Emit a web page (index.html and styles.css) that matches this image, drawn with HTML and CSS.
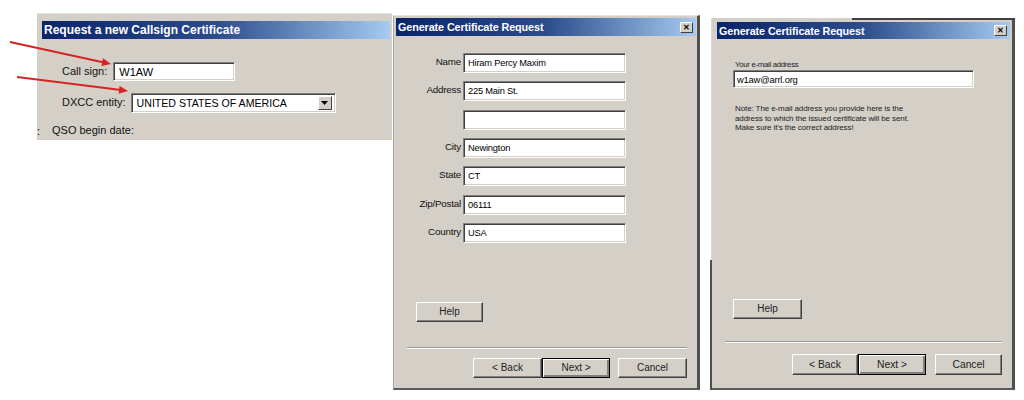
FILE: index.html
```html
<!DOCTYPE html>
<html>
<head>
<meta charset="utf-8">
<title>Callsign Certificate</title>
<link rel="stylesheet" href="styles.css">
</head>
<body>
<div class="page">
  <div class="panel1">
    <div class="title title-lg">Request a new Callsign Certificate</div>
    <div class="row1 row-call">
      <span class="lbl1">Call sign:</span>
      <span class="field field-call">W1AW</span>
    </div>
    <div class="row1 row-dxcc">
      <span class="lbl1">DXCC entity:</span>
      <span class="field select">
        <span class="select-text">UNITED STATES OF AMERICA</span>
        <span class="drop"><svg width="7" height="4" viewBox="0 0 7 4"><path d="M0 0H7L3.5 4Z" fill="#000"/></svg></span>
      </span>
    </div>
    <div class="row-qso"><span class="colon">:</span><span class="lbl1">QSO begin date:</span></div>
  </div>

  <div class="panel2">
    <div class="title title-sm"><span>Generate Certificate Request</span><span class="close">&#x2715;</span></div>
    <div class="form">
      <label>Name</label><span class="field f2">Hiram Percy Maxim</span>
      <label>Address</label><span class="field f2">225 Main St.</span>
      <label></label><span class="field f2"></span>
      <label>City</label><span class="field f2">Newington</span>
      <label>State</label><span class="field f2">CT</span>
      <label>Zip/Postal</label><span class="field f2">06111</span>
      <label>Country</label><span class="field f2">USA</span>
    </div>
    <div class="btn help2">Help</div>
    <div class="sep sep2"></div>
    <div class="btnrow btnrow2">
      <div class="btn b2">&lt; Back</div>
      <div class="btn b2 default">Next &gt;</div>
      <div class="btn b2 cancel">Cancel</div>
    </div>
  </div>

  <div class="panel3">
    <div class="title title-sm t3"><span>Generate Certificate Request</span><span class="close">&#x2715;</span></div>
    <div class="lbl3">Your e-mail address</div>
    <div class="field f3">w1aw@arrl.org</div>
    <p class="note">Note: The e-mail address you provide here is the<br>address to which the issued certificate will be sent.<br>Make sure it's the correct address!</p>
    <div class="btn help3">Help</div>
    <div class="sep sep3"></div>
    <div class="btnrow btnrow3">
      <div class="btn b3 back3">&lt; Back</div>
      <div class="btn b3 default">Next &gt;</div>
      <div class="btn b3 cancel3">Cancel</div>
    </div>
  </div>

  <svg class="arrows" width="1024" height="400" viewBox="0 0 1024 400">
    <line x1="10" y1="42" x2="104" y2="62.5" stroke="#d42424" stroke-width="2"/>
    <polygon points="111,64 103.05,58.2 101.35,66" fill="#d42424"/>
    <line x1="17" y1="77" x2="121" y2="90" stroke="#d42424" stroke-width="2"/>
    <polygon points="128,91 119.57,85.93 118.57,93.87" fill="#d42424"/>
  </svg>
</div>
</body>
</html>
```

FILE: styles.css
```css
* { box-sizing: border-box; }
html, body { margin: 0; padding: 0; background: #fff; }
body { font-family: "Liberation Sans", Arial, sans-serif; color: #000; }

.page {
  position: relative;
  width: 1024px;
  height: 400px;
  display: flex;
  align-items: flex-start;
}

.title {
  background: linear-gradient(to right, #0a246a 0%, #2c4c8c 50%, #a6caf0 100%);
  color: #fff;
  font-weight: bold;
  display: flex;
  align-items: center;
  justify-content: space-between;
  white-space: nowrap;
}
.title-lg {
  height: 18px;
  font-size: 12px;
  padding-left: 2px;
  margin: 0 2px 0 5px;
}
.title-sm {
  height: 18px;
  font-size: 10.8px;
  padding: 0 3px 0 2px;
  letter-spacing: -0.1px;
}
.close {
  width: 13px;
  height: 11px;
  background: #d4d0c8;
  color: #000;
  font-size: 8px;
  font-weight: bold;
  display: flex;
  align-items: center;
  justify-content: center;
  border: 1px solid;
  border-color: #fff #404040 #404040 #fff;
  letter-spacing: 0;
}

.field {
  display: flex;
  align-items: center;
  background: #fff;
  border: 1px solid;
  border-color: #808080 #fff #fff #808080;
  box-shadow: inset 1px 1px 0 #404040, inset -1px -1px 0 #d4d0c8;
  white-space: nowrap;
  overflow: hidden;
}

/* Panel 1 */
.panel1 {
  margin: 13px 0 0 37px;
  width: 355px;
  height: 127px;
  background: #d4d0c8;
  border-top: 1px solid #e6e4e0;
  padding-top: 7px;
  display: flex;
  flex-direction: column;
  font-size: 11px;
}
.row1 { display: flex; align-items: center; padding-left: 25px; }
.row-call { margin-top: 23px; }
.row-dxcc { margin-top: 12px; }
.lbl1 { font-size: 11px; position: relative; top: -1px; color: #111; }
.field-call {
  margin-left: 6px;
  width: 122px;
  height: 19px;
  padding-left: 5px;
  font-size: 11px;
}
.select {
  margin-left: 5px;
  width: 205px;
  height: 20px;
  padding-left: 5px;
  font-size: 10.6px;
  justify-content: space-between;
}
.select-text { flex: 1; }
.drop {
  width: 14px;
  height: 14px;
  margin-right: 3px;
  background: #d4d0c8;
  border: 1px solid;
  border-color: #fff #404040 #404040 #fff;
  display: flex;
  align-items: center;
  justify-content: center;
}
.row-qso { display: flex; align-items: center; margin-top: 12px; }
.colon { width: 15px; font-size: 11px; }

/* Panel 2 */
.panel2 {
  margin: 15px 0 0 1px;
  width: 307px;
  height: 375px;
  background: #d4d0c8;
  border-left: 1px solid #a8a8a8;
  border-top: 1px solid #e6e4e0;
  border-right: 3px solid #505050;
  border-bottom: 2px solid #5a5a5a;
  display: flex;
  flex-direction: column;
}
.panel2 .title { margin: 2px 1px 0 2px; }
.form {
  margin-top: 17px;
  display: grid;
  grid-template-columns: 67px 163px;
  column-gap: 2px;
  grid-auto-rows: 20px;
  row-gap: 8.33px;
  font-size: 9.8px;
}
.form label {
  text-align: right;
  align-self: center;
  margin-top: -3px;
  letter-spacing: -0.2px;
  color: #111;
}
.f2 { padding-left: 4px; font-size: 9.3px; letter-spacing: -0.2px; }

.btn {
  background: #d4d0c8;
  border: 1px solid;
  border-color: #fff #404040 #404040 #fff;
  box-shadow: inset -1px -1px 0 #808080;
  display: flex;
  align-items: center;
  justify-content: center;
  font-size: 10px;
  color: #222;
}
.btn.default {
  border: 1px solid #000;
  box-shadow: inset 1px 1px 0 #fff, inset -2px -2px 0 #808080;
}
.help2 { margin: 59px 0 0 22px; width: 67px; height: 20px; }
.sep { border-top: 1px solid #9a9a9a; border-bottom: 1px solid #fff; height: 2px; }
.sep2 { margin: 25px 0 0 13px; width: 280px; }
.btnrow { display: flex; justify-content: flex-end; }
.btnrow2 { margin-top: 9px; padding-right: 10px; }
.b2 { width: 69px; height: 20px; }
.btnrow2 .default { width: 68px; }
.btnrow2 .cancel { margin-left: 8px; }

/* Panel 3 */
.panel3 {
  position: relative;
  margin: 18px 0 0 11px;
  width: 304px;
  height: 372px;
  background: #d4d0c8;
  border-left: 1px solid #d8d8d8;
  border-right: 3px solid #505050;
  border-bottom: 2px solid #5a5a5a;
  display: flex;
  flex-direction: column;
}
.panel3::before {
  content: "";
  position: absolute;
  top: 0;
  left: 140px;
  right: -3px;
  height: 2px;
  background: #404040;
}
.panel3::after {
  content: "";
  position: absolute;
  left: -2px;
  top: 242px;
  bottom: -2px;
  width: 2px;
  background: #505050;
}
.t3 { margin: 4px 2px 0 5px; height: 17px; }
.lbl3 {
  margin: 21px 0 0 23px;
  font-size: 7.8px;
  letter-spacing: -0.3px;
  color: #222;
}
.f3 {
  margin: 1px 0 0 21px;
  width: 241px;
  height: 18px;
  padding-left: 3px;
  font-size: 9.4px;
  letter-spacing: -0.2px;
}
.note {
  margin: 16px 0 0 23px;
  font-size: 8px;
  line-height: 9.5px;
  letter-spacing: -0.1px;
  color: #222;
}
.help3 { margin: 166px 0 0 21px; width: 69px; height: 20px; }
.sep3 { margin: 22px 0 0 13px; width: 277px; }
.btnrow3 { margin-top: 11px; padding-right: 10px; }
.b3 { height: 21px; font-size: 10.3px; }
.back3 { width: 66px; }
.btnrow3 .default { width: 68px; }
.cancel3 { width: 67px; margin-left: 9px; }

.arrows {
  position: absolute;
  left: 0;
  top: 0;
  pointer-events: none;
}
```
